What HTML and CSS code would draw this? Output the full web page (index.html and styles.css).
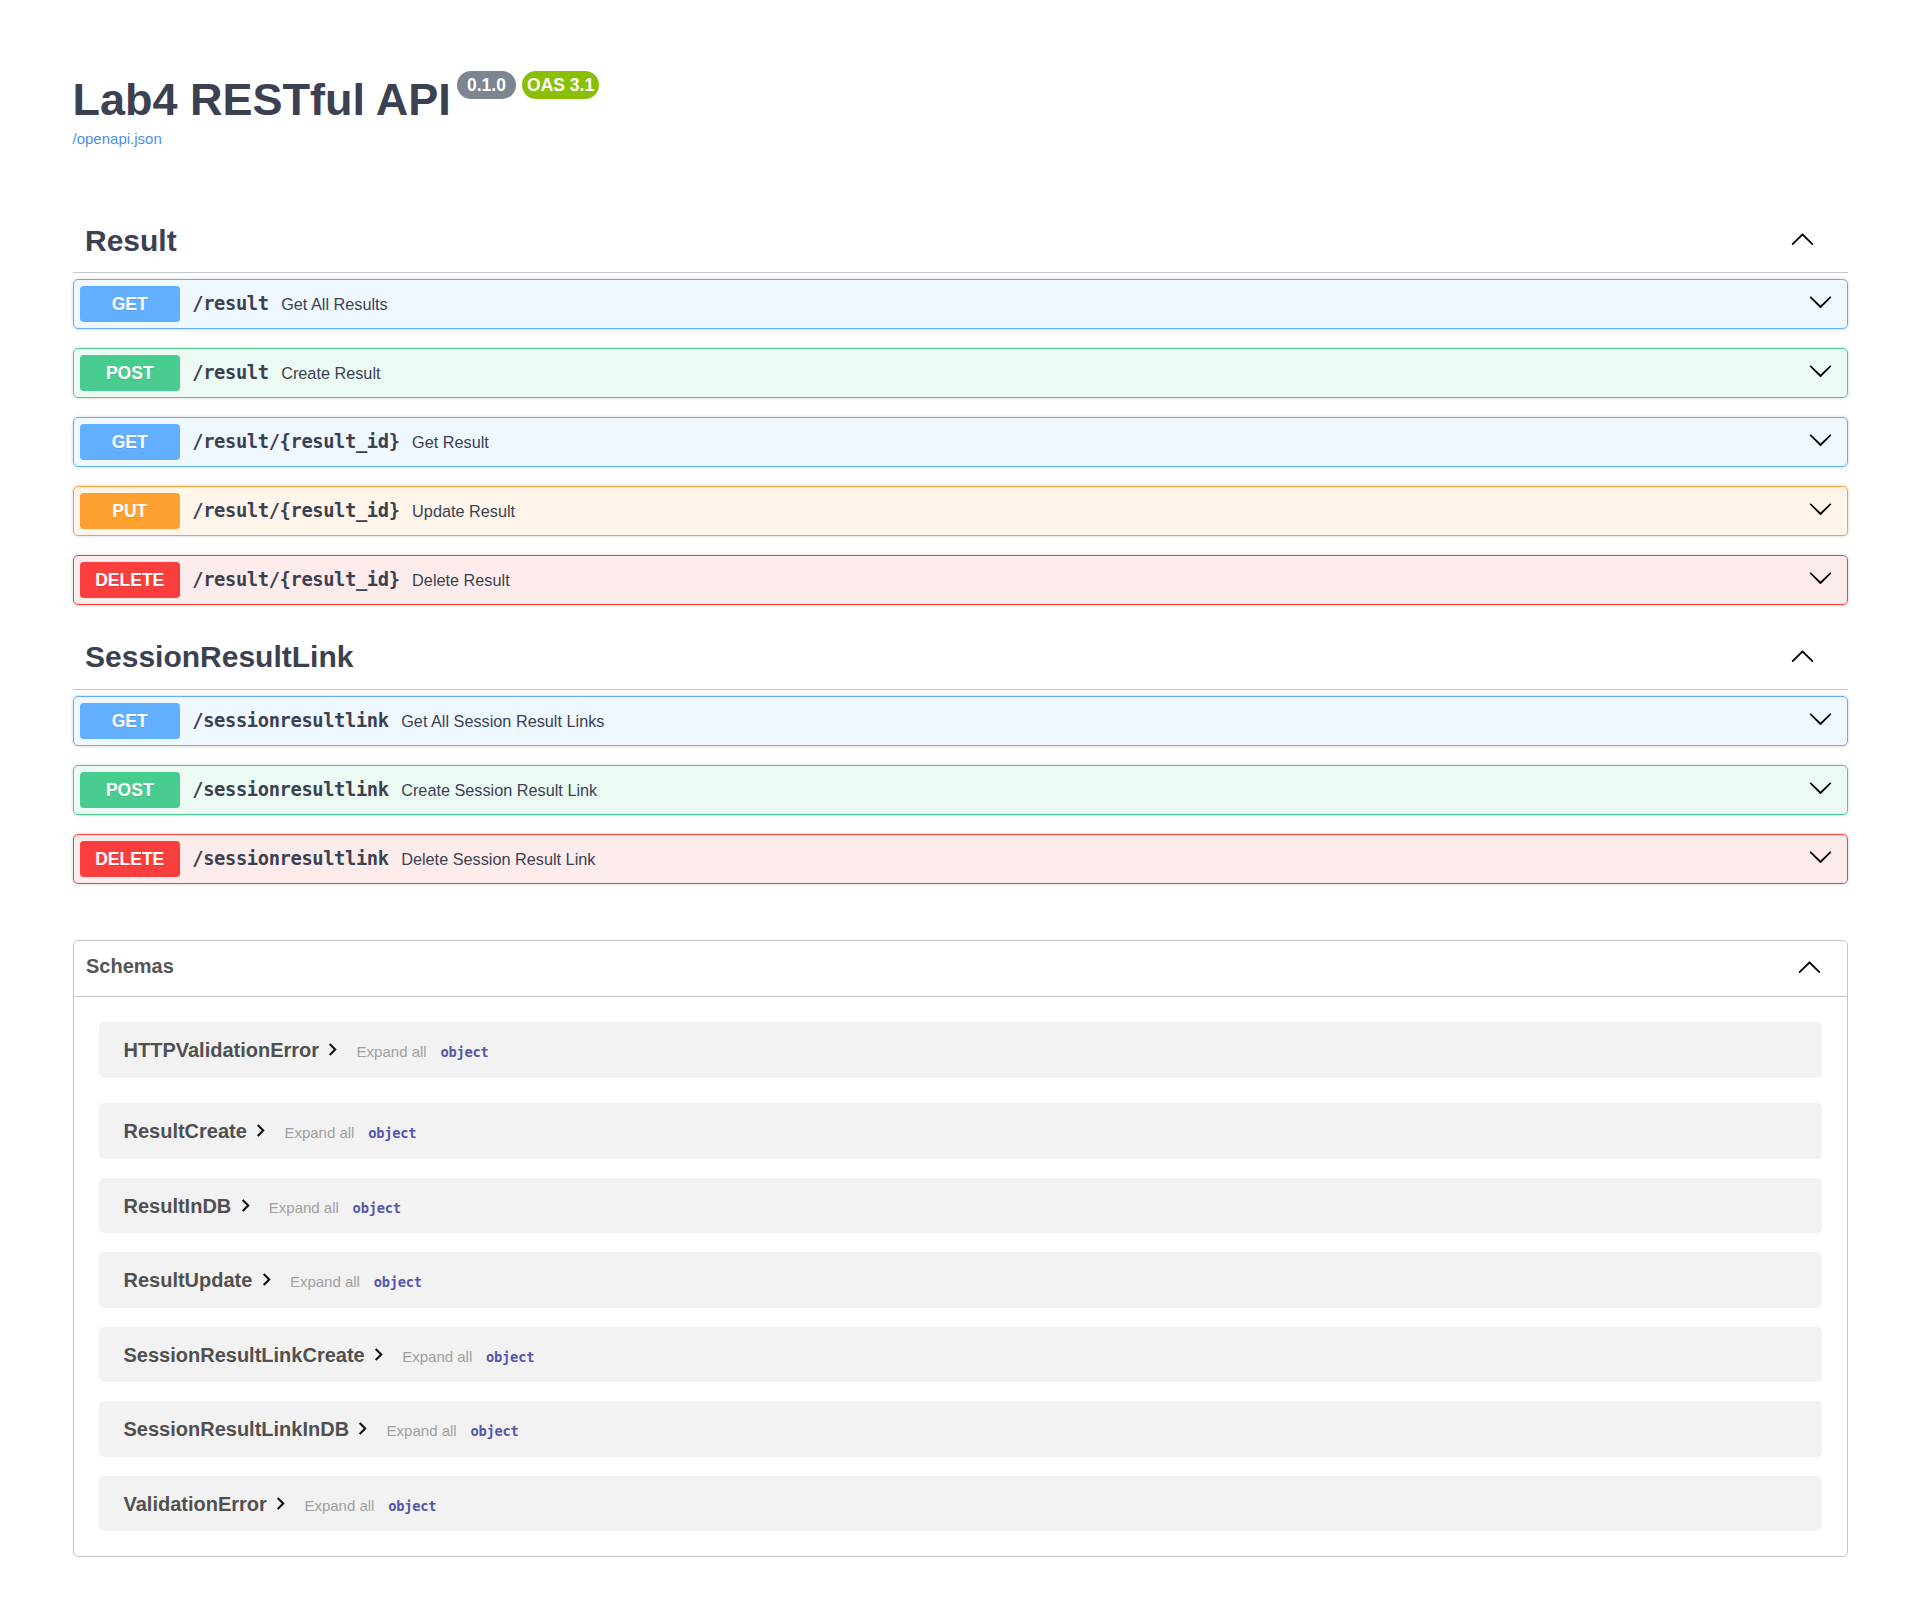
FILE: index.html
```html
<!DOCTYPE html>
<html lang="en">
<head>
<meta charset="utf-8">
<title>Lab4 RESTful API - Swagger UI</title>
<link rel="stylesheet" href="styles.css">
</head>
<body>
<svg class="defs" width="0" height="0" aria-hidden="true">
  <defs>
    <symbol id="arrow-up" viewBox="0 0 20 20"><path d="M17.418 14.908c.272.268.709.268.979 0s.271-.701 0-.969l-7.908-7.83a.697.697 0 0 0-.979 0l-7.908 7.83c-.27.268-.27.701 0 .969.271.268.709.268.979 0L10 7.767l7.418 7.141z"/></symbol>
    <symbol id="arrow-down" viewBox="0 0 20 20"><path d="M17.418 6.109c.272-.268.709-.268.979 0s.271.701 0 .969l-7.908 7.83a.697.697 0 0 1-.979 0l-7.908-7.830c-.27-.268-.27-.701 0-.969.271-.268.709-.268.979 0L10 13.25l7.418-7.141z"/></symbol>
    <symbol id="chevron" viewBox="0 0 24 24"><path d="M10 6 8.59 7.41 13.17 12l-4.58 4.59L10 18l6-6z"/></symbol>
  </defs>
</svg>
<div class="swagger">
  <div class="wrapper">
    <div class="info">
      <hgroup class="main">
        <h2 class="title">Lab4 RESTful API<span class="badges"><small class="badge"><pre class="version"> 0.1.0 </pre></small><small class="badge stamp"><pre class="version">OAS 3.1</pre></small></span></h2>
        <a class="spec-link" href="#">/openapi.json</a>
      </hgroup>
    </div>
  </div>

  <div class="wrapper">
    <section class="tag-section">
      <h3 class="tag"><span class="tag-name">Result</span><span class="tag-fill"></span><button class="icon-btn tag-arrow" aria-label="collapse"><svg><use href="#arrow-up"/></svg></button></h3>
      <div class="ops">
        <div class="opblock get"><div class="summary"><span class="method">GET</span><span class="path">/result</span><span class="desc">Get All Results</span><button class="icon-btn op-arrow" aria-label="expand"><svg><use href="#arrow-down"/></svg></button></div></div>
        <div class="opblock post"><div class="summary"><span class="method">POST</span><span class="path">/result</span><span class="desc">Create Result</span><button class="icon-btn op-arrow" aria-label="expand"><svg><use href="#arrow-down"/></svg></button></div></div>
        <div class="opblock get"><div class="summary"><span class="method">GET</span><span class="path">/result/{result_id}</span><span class="desc">Get Result</span><button class="icon-btn op-arrow" aria-label="expand"><svg><use href="#arrow-down"/></svg></button></div></div>
        <div class="opblock put"><div class="summary"><span class="method">PUT</span><span class="path">/result/{result_id}</span><span class="desc">Update Result</span><button class="icon-btn op-arrow" aria-label="expand"><svg><use href="#arrow-down"/></svg></button></div></div>
        <div class="opblock delete"><div class="summary"><span class="method">DELETE</span><span class="path">/result/{result_id}</span><span class="desc">Delete Result</span><button class="icon-btn op-arrow" aria-label="expand"><svg><use href="#arrow-down"/></svg></button></div></div>
      </div>
    </section>

    <section class="tag-section">
      <h3 class="tag"><span class="tag-name">SessionResultLink</span><span class="tag-fill"></span><button class="icon-btn tag-arrow" aria-label="collapse"><svg><use href="#arrow-up"/></svg></button></h3>
      <div class="ops">
        <div class="opblock get"><div class="summary"><span class="method">GET</span><span class="path">/sessionresultlink</span><span class="desc">Get All Session Result Links</span><button class="icon-btn op-arrow" aria-label="expand"><svg><use href="#arrow-down"/></svg></button></div></div>
        <div class="opblock post"><div class="summary"><span class="method">POST</span><span class="path">/sessionresultlink</span><span class="desc">Create Session Result Link</span><button class="icon-btn op-arrow" aria-label="expand"><svg><use href="#arrow-down"/></svg></button></div></div>
        <div class="opblock delete"><div class="summary"><span class="method">DELETE</span><span class="path">/sessionresultlink</span><span class="desc">Delete Session Result Link</span><button class="icon-btn op-arrow" aria-label="expand"><svg><use href="#arrow-down"/></svg></button></div></div>
      </div>
    </section>

    <section class="models">
      <h4 class="models-head"><span>Schemas</span><svg class="models-arrow"><use href="#arrow-up"/></svg></h4>
      <div class="models-list">
        <div class="model-container"><div class="model-row"><span class="model-title">HTTPValidationError</span><svg class="chev"><use href="#chevron"/></svg><span class="expand-all">Expand all</span><span class="prop-type">object</span></div></div>
        <div class="model-container"><div class="model-row"><span class="model-title">ResultCreate</span><svg class="chev"><use href="#chevron"/></svg><span class="expand-all">Expand all</span><span class="prop-type">object</span></div></div>
        <div class="model-container"><div class="model-row"><span class="model-title">ResultInDB</span><svg class="chev"><use href="#chevron"/></svg><span class="expand-all">Expand all</span><span class="prop-type">object</span></div></div>
        <div class="model-container"><div class="model-row"><span class="model-title">ResultUpdate</span><svg class="chev"><use href="#chevron"/></svg><span class="expand-all">Expand all</span><span class="prop-type">object</span></div></div>
        <div class="model-container"><div class="model-row"><span class="model-title">SessionResultLinkCreate</span><svg class="chev"><use href="#chevron"/></svg><span class="expand-all">Expand all</span><span class="prop-type">object</span></div></div>
        <div class="model-container"><div class="model-row"><span class="model-title">SessionResultLinkInDB</span><svg class="chev"><use href="#chevron"/></svg><span class="expand-all">Expand all</span><span class="prop-type">object</span></div></div>
        <div class="model-container"><div class="model-row"><span class="model-title">ValidationError</span><svg class="chev"><use href="#chevron"/></svg><span class="expand-all">Expand all</span><span class="prop-type">object</span></div></div>
      </div>
    </section>
  </div>
</div>
</body>
</html>
```
FILE: styles.css
```css
html {
  zoom: 1.25;
  line-height: 1.15;
}

body {
  margin: 0;
  background: #fff;
  color: #3b4151;
  font-family: "Liberation Sans", Arial, sans-serif;
}

.defs {
  position: absolute;
  width: 0;
  height: 0;
  overflow: hidden;
}

.wrapper {
  box-sizing: border-box;
  width: 100%;
  max-width: 1460px;
  margin: 0 auto;
  padding: 0 20px;
}

/* ---------- info ---------- */
.info {
  margin: 59.5px 0 46.5px;
}

.main {
  margin: 0;
  font-size: 16px;
}

.title {
  margin: 0;
  font-size: 36px;
  font-weight: 700;
  color: #3b4151;
  line-height: 1.15;
}

.badges {
  display: inline;
}

.badge {
  display: inline-block;
  vertical-align: top;
  position: relative;
  top: -2.5px;
  margin: 0 0 0 5px;
  padding: 2px 4px;
  border-radius: 57px;
  background: #7d8492;
}

.badge.stamp {
  background: #89bf04;
}

.version {
  margin: 0;
  padding: 0;
  font-family: "Liberation Sans", Arial, sans-serif;
  font-size: 14px;
  line-height: 18px;
  font-weight: 700;
  color: #fff;
}

.spec-link {
  font-size: 12px;
  color: #4990e2;
  text-decoration: none;
}

/* ---------- tags ---------- */
.tag-section {
  display: flex;
  flex-direction: column;
}

.tag {
  display: flex;
  align-items: center;
  margin: 0 0 5px;
  padding: 13px 20px 11px 10px;
  border-bottom: 1px solid rgba(59, 65, 81, 0.3);
  font-size: 24px;
  font-weight: 700;
  color: #3b4151;
  line-height: 1.15;
}

.tag-fill {
  flex: 1;
}

.icon-btn {
  display: flex;
  margin: 0;
  padding: 1px 6px;
  border: none;
  background: none;
  cursor: pointer;
}

.icon-btn svg {
  display: block;
  width: 20px;
  height: 20px;
  fill: #000;
}

.tag-arrow {
  margin-bottom: 3px;
}

/* ---------- operation blocks ---------- */
.opblock {
  margin: 0 0 15px;
  border: 1px solid #000;
  border-radius: 4px;
  box-shadow: 0 0 3px rgba(0, 0, 0, 0.19);
}

.summary {
  display: flex;
  align-items: center;
  padding: 5px;
}

.method {
  min-width: 80px;
  padding: 6px 0;
  border-radius: 3px;
  color: #fff;
  font-size: 14px;
  font-weight: 700;
  line-height: 16.6px;
  text-align: center;
  text-shadow: 0 1px 0 rgba(0, 0, 0, 0.1);
}

.path {
  padding: 0 10px;
  font-family: "DejaVu Sans Mono", "Liberation Mono", monospace;
  font-size: 15px;
  font-weight: 700;
  letter-spacing: -0.3px;
  color: #3b4151;
}

.desc {
  flex: 1;
  font-size: 13px;
  color: #3b4151;
}

.op-arrow {
  margin-bottom: 4px;
}

.opblock.get {
  background: rgba(97, 175, 254, 0.1);
  border-color: #61affe;
}
.opblock.get .method {
  background: #61affe;
}

.opblock.post {
  background: rgba(73, 204, 144, 0.1);
  border-color: #49cc90;
}
.opblock.post .method {
  background: #49cc90;
}

.opblock.put {
  background: rgba(252, 161, 48, 0.1);
  border-color: #fca130;
}
.opblock.put .method {
  background: #fca130;
}

.opblock.delete {
  background: rgba(249, 62, 62, 0.1);
  border-color: #f93e3e;
}
.opblock.delete .method {
  background: #f93e3e;
}

/* ---------- schemas ---------- */
.models {
  margin: 30px 0;
  padding: 0 0 20px;
  border: 1px solid rgba(59, 65, 81, 0.3);
  border-radius: 4px;
}

.models-head {
  display: flex;
  align-items: center;
  margin: 0 0 5px;
  padding: 10px 20px 14px 10px;
  border-bottom: 1px solid rgba(59, 65, 81, 0.3);
  font-size: 16px;
  font-weight: 700;
  color: #555;
}

.models-head span {
  flex: 1;
}

.models-arrow {
  display: block;
  width: 20px;
  height: 20px;
  fill: #000;
}

.model-container {
  margin: 0 20px 15px;
  padding: 12px 20px;
  border-radius: 4px;
  background: rgba(0, 0, 0, 0.05);
}

.model-container:first-child {
  margin: 20px;
}

.model-container:last-child {
  margin: 0 20px;
}

.model-row {
  display: block;
  height: 20.6px;
  line-height: 20.6px;
  white-space: nowrap;
}

.model-title {
  font-size: 16px;
  font-weight: 700;
  color: #505050;
}

.chev {
  display: inline-block;
  vertical-align: -4px;
  width: 20px;
  height: 20px;
  margin: 0 3px 0 1px;
  fill: #111;
}

.expand-all {
  padding: 0 6px;
  font-size: 12px;
  line-height: 1;
  color: #a0a0a0;
}

.prop-type {
  margin-left: 5px;
  font-family: "DejaVu Sans Mono", "Liberation Mono", monospace;
  font-size: 11px;
  font-weight: 700;
  line-height: 1;
  letter-spacing: -0.2px;
  color: #55a;
}
```
